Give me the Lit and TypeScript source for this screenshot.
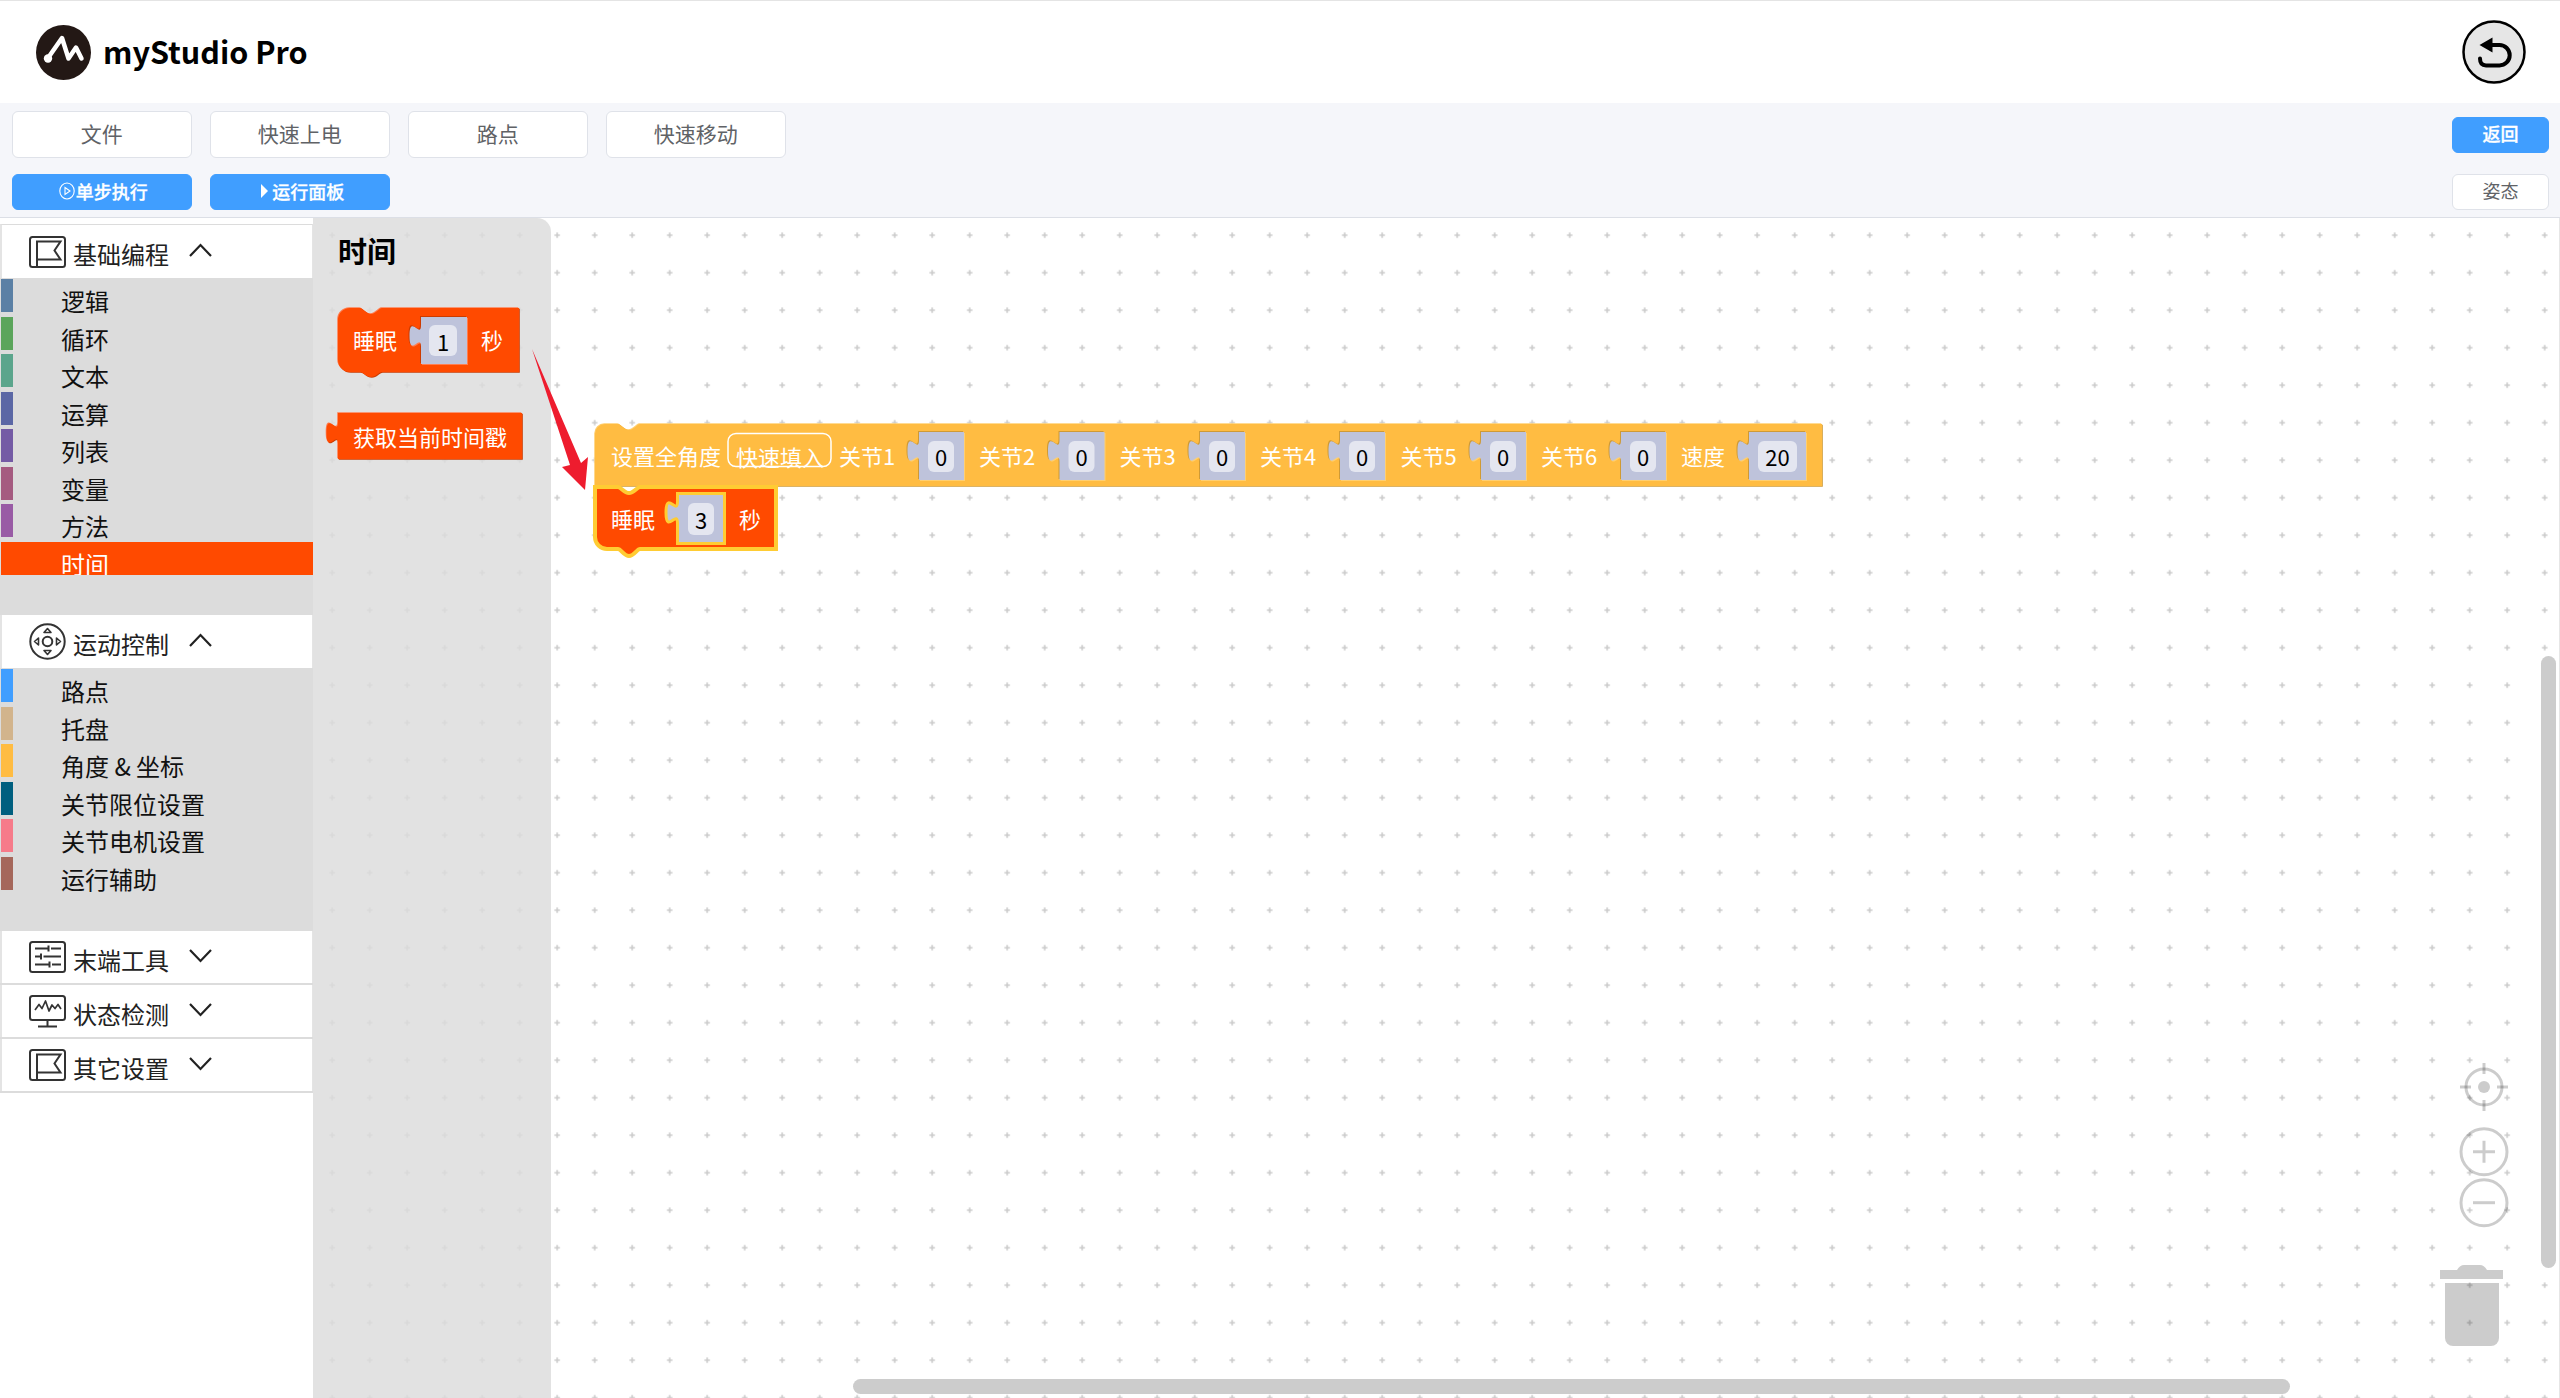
import { LitElement, html, css, svg } from "lit";
import { customElement } from "lit/decorators.js";

type Item = { name: string; color: string; active?: boolean };
type Section = { name: string; icon: any; open: boolean; items?: Item[] };

const flagIcon = html`<svg class="ico" width="37" height="32" viewBox="0 0 37 32" fill="none" stroke="#333" stroke-width="2">
  <rect x="1" y="1" width="35" height="30" rx="2.5"/>
  <path d="M8 31V5.5H31.5L25.5 14.5L31.5 23.5H8"/>
</svg>`;
const padIcon = html`<svg class="ico" width="37" height="37" viewBox="0 0 37 37" fill="none" stroke="#333" stroke-width="2">
  <circle cx="18.5" cy="18.5" r="17.2"/>
  <circle cx="18.5" cy="18.5" r="4.8"/>
  <path d="M18.5 5.5L22 9.5H15Z M18.5 31.5L22 27.5H15Z M5.5 18.5L9.5 15V22Z M31.5 18.5L27.5 15V22Z" stroke-width="1.6" stroke-linejoin="round"/>
</svg>`;
const sliderIcon = html`<svg class="ico" width="37" height="32" viewBox="0 0 37 32" fill="none" stroke="#333" stroke-width="2">
  <rect x="1" y="1" width="35" height="30" rx="2.5"/>
  <path d="M6 7.5H19M19.5 4.5V10.5M22 7.5H32"/>
  <path d="M6 15.5H11.5M12 12.5V18.5M14.5 15.5H32"/>
  <path d="M6 23.5H20M20.5 20.5V26.5M23 23.5H32"/>
</svg>`;
const monitorIcon = html`<svg class="ico" width="37" height="33" viewBox="0 0 37 33" fill="none" stroke="#333" stroke-width="2">
  <rect x="1" y="1" width="35" height="24" rx="2.5"/>
  <path d="M18.5 25V31M9 31.5H28"/>
  <path d="M6 15L10 9.5L13 13.5L16.5 6L20 16L23 10L26 13.5L29 9.5L32 14" stroke-width="1.7" stroke-linejoin="round"/>
</svg>`;
const chevUp = html`<svg class="chev" width="23" height="14" viewBox="0 0 23 14" fill="none" stroke="#222" stroke-width="2.2"><path d="M1 13L11.5 2L22 13"/></svg>`;
const chevDown = html`<svg class="chev" width="23" height="14" viewBox="0 0 23 14" fill="none" stroke="#222" stroke-width="2.2"><path d="M1 1L11.5 12L22 1"/></svg>`;

const sections: Section[] = [
  {
    name: "基础编程", icon: flagIcon, open: true,
    items: [
      { name: "逻辑", color: "#5b80a5" },
      { name: "循环", color: "#5ba55b" },
      { name: "文本", color: "#5ba58c" },
      { name: "运算", color: "#5b67a5" },
      { name: "列表", color: "#745ba5" },
      { name: "变量", color: "#a55b80" },
      { name: "方法", color: "#995ba5" },
      { name: "时间", color: "#ff4a00", active: true },
    ],
  },
  {
    name: "运动控制", icon: padIcon, open: true,
    items: [
      { name: "路点", color: "#409eff" },
      { name: "托盘", color: "#d2b48c" },
      { name: "角度 & 坐标", color: "#ffbc42" },
      { name: "关节限位设置", color: "#005f7f" },
      { name: "关节电机设置", color: "#f67b8a" },
      { name: "运行辅助", color: "#a5675b" },
    ],
  },
  { name: "末端工具", icon: sliderIcon, open: false },
  { name: "状态检测", icon: monitorIcon, open: false },
  { name: "其它设置", icon: flagIcon, open: false },
];

const RED = { main: "#ff4a00", light: "#ff7d50", dark: "#cc3b00" };
const YEL = { main: "#ffbc42", light: "#ffcf70", dark: "#cf9a35" };
const SOCKET = "#bec3db";
const TAB = "c0 14.5 -11.5 -11.6 -11.5 10.9s11.5 -3.6 11.5 10.9";

function layered(d: string, c: { main: string; light: string; dark: string }) {
  return svg`<path d=${d} fill=${c.light} transform="translate(-.8,-.8)"/>
    <path d=${d} fill=${c.dark} transform="translate(.8,.8)"/>
    <path d=${d} fill=${c.main}/>`;
}
function socketPath(x: number, y: number, w: number, h: number) {
  return `M${x} ${y}V${y + 8}${TAB}V${y + h}H${x + w}V${y}Z`;
}
function socket(x: number, y: number, w: number, h: number, c: { light: string; dark: string }) {
  const d = socketPath(x, y, w, h);
  return svg`<path d=${d} fill=${c.dark} transform="translate(-1,-1)"/>
    <path d=${d} fill=${c.light} transform="translate(1,1)"/>
    <path d=${d} fill=${SOCKET}/>`;
}
function field(x: number, y: number, w: number, h: number, val: string, base: number) {
  return svg`<rect x=${x} y=${y} width=${w} height=${h} rx="6" fill="#e4e6f0"/>
    <text class="num" x=${x + w / 2} y=${base} text-anchor="middle">${val}</text>`;
}
function label(x: number, y: number, t: string) {
  return svg`<text class="lbl" x=${x} y=${y}>${t}</text>`;
}

const joints = [
  { l: "关节1", lx: 839, sx: 919 },
  { l: "关节2", lx: 979, sx: 1059.5 },
  { l: "关节3", lx: 1119.5, sx: 1200 },
  { l: "关节4", lx: 1260, sx: 1340 },
  { l: "关节5", lx: 1400.5, sx: 1481 },
  { l: "关节6", lx: 1541, sx: 1621 },
];

@customElement("app-root")
export class AppRoot extends LitElement {
  static styles = css`
    :host {
      display: block;
      width: 2560px;
      height: 1398px;
      overflow: hidden;
      font-family: "Noto Sans CJK SC", "Noto Sans", sans-serif;
      background: #fff;
    }
    .page { display: flex; flex-direction: column; height: 100%; }
    .top {
      height: 102px;
      flex: none;
      display: flex;
      align-items: center;
      justify-content: space-between;
      border-top: 1px solid #e4e4e4;
      padding: 0 34px 0 36px;
    }
    .brand { display: flex; align-items: center; gap: 12px; }
    .brand-name { font-size: 30.5px; font-weight: 700; color: #000; line-height: 1; padding-bottom: 2px; }
    .logo, .undo { display: block; flex: none; }
    .toolbar {
      flex: none;
      display: flex;
      justify-content: space-between;
      background: #f5f6fa;
      border-bottom: 1px solid #dcdfe6;
      padding: 8px 11px 7px 12px;
    }
    .tb-left { display: grid; grid-template-columns: repeat(4, 179.5px); grid-template-rows: 47px 36px; column-gap: 18.5px; row-gap: 16px; }
    .tb-right { display: grid; grid-template-rows: 36px 36px; row-gap: 21px; padding-top: 6px; width: 97px; }
    .btn {
      display: flex;
      align-items: center;
      justify-content: center;
      box-sizing: border-box;
      border: 1.5px solid #dfe2e9;
      border-radius: 6px;
      background: #fff;
      color: #606266;
      font-size: 21px;
      padding-bottom: 4px;
    }
    .btn.small { font-size: 18px; }
    .btn.blue { background: #409eff; border-color: #409eff; color: #fff; font-size: 18px; font-weight: 500; -webkit-text-stroke: .3px #fff; gap: 1px; padding-bottom: 2px; }
    .btn.blue.back { padding-bottom: 4px; }
    .btn.step { padding-left: 3px; }
    .btn.run { padding-left: 6px; gap: 4px; }
    .body { flex: 1; display: flex; min-height: 0; }
    .side { width: 313px; flex: none; background: #fff; padding-top: 6px; box-sizing: border-box; }
    .head {
      box-sizing: border-box;
      height: 53px;
      display: flex;
      align-items: center;
      padding-left: 27px;
      background: #fff;
      border-left: 2px solid #e4e4e4;
      border-right: 1px solid #e4e4e4;
    }
    .head.first { border-top: 1px solid #dcdcdc; height: 54px; }
    .head.gap { height: 52px; margin-bottom: 2px; box-shadow: 0 2px 0 #dcdcdc; }
    .head .ico { flex: none; margin-right: 7px; }
    .head .txt { font-size: 24px; color: #222; width: 95px; margin-right: 21px; line-height: 1; padding-top: 5px; white-space: nowrap; }
    .head .chev { flex: none; margin-top: -3px; }
    .list { background: #dcdcdc; padding: 1px 0 0 1px; display: flex; flex-direction: column; gap: 4.5px; }
    .list.a { padding-bottom: 40.5px; }
    .list.b { padding-bottom: 41.5px; }
    .item { height: 33px; display: flex; font-size: 24px; color: #111; white-space: pre; }
    .item .bar { width: 12px; flex: none; }
    .item .nm { margin: 10px 0 0 48px; line-height: 23px; height: 23px; }
    .item.on { color: #fff; overflow: hidden; }
    .ws { flex: 1; position: relative; min-width: 0; }
    .canvas { display: block; width: 2247px; height: 1180px; }
    .lbl { font-size: 22px; fill: #fff; }
    .num { font-size: 22px; fill: #000; }
    .ttl { font-size: 29px; font-weight: 700; fill: #000; }
  `;

  private renderSide() {
    return html`<aside class="side">
      ${sections.map((s, i) => html`
        <div class="head ${i === 0 ? "first" : ""} ${i >= 2 ? "gap" : ""}">
          ${s.icon}<span class="txt">${s.name}</span>${s.open ? chevUp : chevDown}
        </div>
        ${s.items ? html`<div class="list ${i === 0 ? "a" : "b"}">
          ${s.items.map((it) => html`<div class="item ${it.active ? "on" : ""}" style=${it.active ? `background:${it.color}` : ""}>
            <span class="bar" style="background:${it.color}"></span><span class="nm">${it.name}</span>
          </div>`)}
        </div>` : ""}
      `)}
    </aside>`;
  }

  private renderCanvas() {
    const yellow = "M595 434a10 10 0 0 1 10 -10H618c3 0 6 6 11 6s8 -6 11 -6H1822V486H595Z";
    const sel = "M595 487H618c3 0 6 6 11 6s8 -6 11 -6H776V549H640c-3 0 -6 7 -11 7s-8 -7 -11 -7H607a12 12 0 0 1 -12 -12Z";
    const fly1 = "M338 320a12 12 0 0 1 12 -12H360c3 0 6 6 11 6s8 -6 11 -6H519V372H382c-3 0 -6 5 -11 5s-8 -5 -11 -5H350a12 12 0 0 1 -12 -12Z";
    const fly2 = `M338 413V422${TAB}V459H522V413Z`;
    return html`<svg class="canvas" viewBox="313 218 2247 1180" xmlns="http://www.w3.org/2000/svg">
      <defs>
        <pattern id="dots" patternUnits="userSpaceOnUse" x="575.95" y="403.95" width="37.5" height="37.5">
          <path d="M16 18.75H21.5M18.75 16V21.5" stroke="#ccc" stroke-width="1.6"/>
        </pattern>
      </defs>
      <rect x="313" y="218" width="2247" height="1180" fill="#fff"/>
      <rect x="313" y="218" width="2247" height="1180" fill="url(#dots)"/>
      <rect x="2559" y="218" width="1" height="1180" fill="#e6e6e6"/>

      <path d="M313 218H537a14 14 0 0 1 14 14V1398H313Z" fill="#dcdcdc" opacity=".82"/>
      <text class="ttl" x="338" y="263">时间</text>

      ${layered(fly1, RED)}
      ${label(353, 349, "睡眠")}
      ${socket(421, 317, 46, 47, RED)}
      ${field(429, 325, 28, 31, "1", 351)}
      ${label(481, 349, "秒")}

      ${layered(fly2, RED)}
      ${label(353, 446, "获取当前时间戳")}

      <path d="M532 349L581 463L588 457L585 490L562 467L570 465Z" fill="#ee1c2e"/>

      ${layered(yellow, YEL)}
      ${label(611, 465, "设置全角度")}
      <rect x="728" y="433.5" width="103" height="33" rx="8" fill="none" stroke="#fff" stroke-width="1.5"/>
      ${label(736, 466, "快速填入")}
      ${joints.map((j) => svg`
        ${label(j.lx, 465, j.l)}
        ${socket(j.sx, 432, 45, 48, YEL)}
        ${field(j.sx + 9, 441, 26, 31, "0", 466)}
      `)}
      ${label(1681, 465, "速度")}
      ${socket(1749, 432, 57, 48, YEL)}
      ${field(1758, 441, 39, 31, "20", 466)}

      <path d=${sel} fill="#ff4a00" stroke="#ffcc33" stroke-width="4"/>
      ${label(611, 528, "睡眠")}
      <path d=${socketPath(677.5, 493.5, 47, 50)} fill=${SOCKET} stroke="#ffcc33" stroke-width="3"/>
      ${field(688, 503, 26, 32, "3", 529)}
      ${label(739, 528, "秒")}

      <g fill="none" stroke="#000" stroke-opacity=".2" stroke-width="3">
        <circle cx="2484" cy="1087" r="18"/>
        <path d="M2484 1063V1074M2484 1100V1111M2460 1087H2471M2497 1087H2508"/>
        <circle cx="2484" cy="1151.7" r="23"/>
        <path d="M2473 1151.7H2495M2484 1140.7V1162.7"/>
        <circle cx="2484" cy="1202.7" r="23"/>
        <path d="M2473 1202.7H2495"/>
      </g>
      <circle cx="2484" cy="1087" r="6" fill="#000" fill-opacity=".2"/>
      <path d="M2440 1270H2457Q2460 1265 2464 1265H2480Q2484 1265 2487 1270H2503V1279H2440Z" fill="#000" fill-opacity=".2"/>
      <path d="M2445 1283H2499V1338a8 8 0 0 1 -8 8H2453a8 8 0 0 1 -8 -8Z" fill="#000" fill-opacity=".2"/>

      <rect x="2541" y="656" width="15" height="612" rx="7.5" fill="#ccc"/>
      <rect x="853" y="1379" width="1437" height="15" rx="7.5" fill="#ccc"/>
    </svg>`;
  }

  render() {
    return html`<div class="page">
      <header class="top">
        <div class="brand">
          <svg class="logo" width="55" height="55" viewBox="0 0 55 55">
            <circle cx="27.5" cy="27.5" r="27.5" fill="#231815"/>
            <path d="M12 33L26 13L32.5 33.5L40 22.5L45.5 33.5" fill="none" stroke="#fff" stroke-width="4.5" stroke-linejoin="round" stroke-linecap="round"/>
            <circle cx="12" cy="33.5" r="4.2" fill="#fff"/>
          </svg>
          <span class="brand-name">myStudio Pro</span>
        </div>
        <svg class="undo" width="64" height="64" viewBox="0 0 64 64">
          <circle cx="32" cy="32" r="30.5" fill="#e6e6e6" stroke="#000" stroke-width="2.5"/>
          <path d="M17.5 25L30.5 17.5V32.5Z" fill="#000"/>
          <path d="M28 25H37.5a10.2 10.2 0 0 1 0 20.4H24Q18 45.4 18 38.5" fill="none" stroke="#000" stroke-width="4" stroke-linecap="round"/>
        </svg>
      </header>
      <div class="toolbar">
        <div class="tb-left">
          <div class="btn">文件</div>
          <div class="btn">快速上电</div>
          <div class="btn">路点</div>
          <div class="btn">快速移动</div>
          <div class="btn blue step">
            <svg width="16" height="18" viewBox="0 0 16 18" fill="none" stroke="#fff" stroke-width="1.1"><ellipse cx="8" cy="9" rx="7.2" ry="8"/><path d="M6 5.5L11 9L6 12.5Z"/></svg>
            <span>单步执行</span>
          </div>
          <div class="btn blue run">
            <svg width="7" height="14" viewBox="0 0 7 14"><path d="M0 0L7 7L0 14Z" fill="#fff"/></svg>
            <span>运行面板</span>
          </div>
        </div>
        <div class="tb-right">
          <div class="btn blue back">返回</div>
          <div class="btn small">姿态</div>
        </div>
      </div>
      <div class="body">
        ${this.renderSide()}
        <main class="ws">${this.renderCanvas()}</main>
      </div>
    </div>`;
  }
}
